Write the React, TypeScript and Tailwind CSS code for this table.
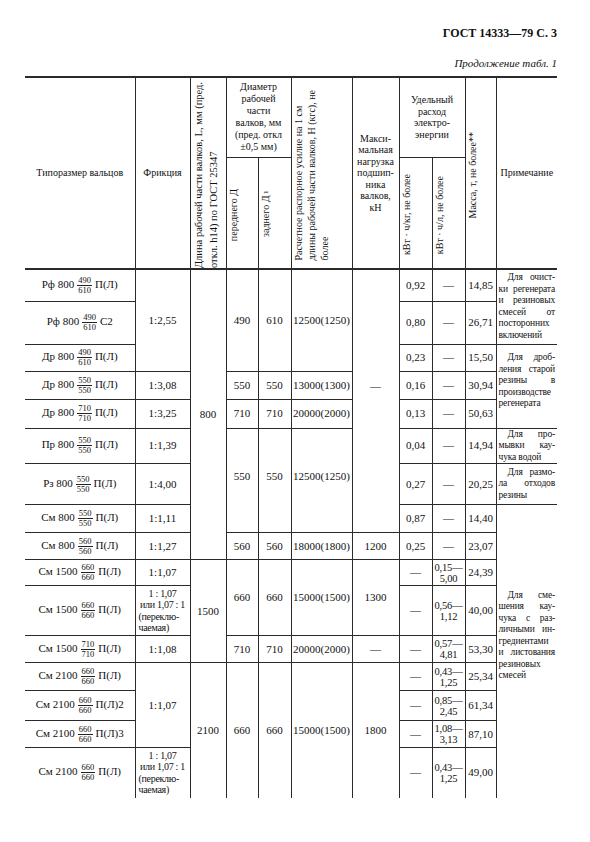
import React from "react";

const cell = "border border-[#2b2b2b] p-0 text-center align-middle";

function Fr({ a, b }: { a: string; b: string }) {
  return (
    <span className="inline-flex flex-col items-center align-middle text-[8.5px] leading-[9px] mx-[3px]">
      <span className="border-b border-[#222] px-[1px]">{a}</span>
      <span>{b}</span>
    </span>
  );
}

function Name({ p, n, a, b, s, last }: { p: string; n: string; a: string; b: string; s: string; last?: boolean }) {
  return (
    <td className={`${cell} border-l-0 whitespace-nowrap ${last ? "border-b-0" : ""}`}>
      {p} {n}
      <Fr a={a} b={b} />
      {s}
    </td>
  );
}

function V({ children, lh = "leading-[13px]" }: { children: React.ReactNode; lh?: string }) {
  return (
    <div className={`[writing-mode:vertical-rl] rotate-180 mx-auto whitespace-nowrap text-left pb-[4px] ${lh}`}>
      {children}
    </div>
  );
}

function Two({ a, b }: { a: string; b: string }) {
  return (
    <div className="text-[10.5px] leading-[11px] whitespace-nowrap tracking-[-0.2px]">
      {a}
      <br />
      {b}
    </div>
  );
}

function Switch() {
  return (
    <div className="text-[10px] leading-[11.5px] whitespace-nowrap tracking-[-0.3px]">
      1 : 1,07
      <br />
      или 1,07 : 1
      <br />
      <div className="text-left pl-[3px]">
        (переклю-
        <br />
        чаемая)
      </div>
    </div>
  );
}

function Note({ lines, top }: { lines: string[]; top?: boolean }) {
  return (
    <div
      className={`text-[9.5px] leading-[11.5px] tracking-[-0.15px] whitespace-nowrap px-[2px] ${top ? "pt-[4px]" : ""}`}
    >
      {lines.map((l, i) => (
        <div
          key={i}
          className={`${i === 0 ? "pl-[9px]" : ""} ${
            i < lines.length - 1 && l.includes(" ") ? "text-justify [text-align-last:justify]" : "text-left"
          }`}
        >
          {l}
        </div>
      ))}
    </div>
  );
}

const dash = "—";

export default function App() {
  return (
    <div className="bg-white text-[#111] font-['Liberation_Serif',serif] w-[590px] h-[842px] pt-[26px]">
      <div className="text-right pr-[33px] text-[12px] leading-[14px] font-bold">ГОСТ 14333—79 С. 3</div>
      <div className="text-right pr-[33px] mt-[16px] text-[11px] leading-[14px] italic">Продолжение табл. 1</div>
      <table className="ml-[25px] mt-[6px] w-[532px] table-fixed border-collapse text-[11px] leading-[13px]">
        <colgroup>
          <col className="w-[110px]" />
          <col className="w-[55px]" />
          <col className="w-[36px]" />
          <col className="w-[32px]" />
          <col className="w-[33px]" />
          <col className="w-[61px]" />
          <col className="w-[47px]" />
          <col className="w-[33px]" />
          <col className="w-[33px]" />
          <col className="w-[31px]" />
          <col className="w-[61px]" />
        </colgroup>
        <thead className="text-[10px] leading-[12px]">
          <tr className="h-[80px] border-t-2 border-[#2b2b2b]">
            <td rowSpan={2} className={`${cell} border-l-0`}>Типоразмер вальцов</td>
            <td rowSpan={2} className={cell}>Фрикция</td>
            <td rowSpan={2} className={`${cell} align-bottom text-[10.5px]`}>
              <V lh="leading-[15px]">
                Длина рабочей части валков, L, мм (пред.
                <br />
                откл. h14) по ГОСТ 25347
              </V>
            </td>
            <td colSpan={2} className={cell}>
              Диаметр
              <br />
              рабочей
              <br />
              части
              <br />
              валков, мм
              <br />
              (пред. откл
              <br />
              ±0,5 мм)
            </td>
            <td rowSpan={2} className={`${cell} align-bottom`}>
              <V>
                Расчетное распорное усилие на 1 см
                <br />
                длины рабочей части валков, Н (кгс), не
                <br />
                более
              </V>
            </td>
            <td rowSpan={2} className={`${cell} leading-[11.5px]`}>
              Макси-
              <br />
              мальная
              <br />
              нагрузка
              <br />
              подшип-
              <br />
              ника
              <br />
              валков,
              <br />
              кН
            </td>
            <td colSpan={2} className={`${cell} leading-[11.5px]`}>
              Удельный
              <br />
              расход
              <br />
              электро-
              <br />
              энергии
            </td>
            <td rowSpan={2} className={`${cell} align-bottom`}>
              <V>Масса, т, не более**</V>
            </td>
            <td rowSpan={2} className={`${cell} border-r-0`}>Примечание</td>
          </tr>
          <tr className="h-[112px] border-b-2 border-[#2b2b2b]">
            <td className={`${cell} align-bottom`}>
              <V>переднего Д</V>
            </td>
            <td className={`${cell} align-bottom`}>
              <V>
                заднего Д<sub className="text-[7px]">1</sub>
              </V>
            </td>
            <td className={`${cell} align-bottom`}>
              <V>кВт · ч/кг, не более</V>
            </td>
            <td className={`${cell} align-bottom`}>
              <V>кВт · ч/л, не более</V>
            </td>
          </tr>
        </thead>
        <tbody>
          <tr className="h-[32px]">
            <Name p="Рф" n="800" a="490" b="610" s="П(Л)" />
            <td rowSpan={3} className={cell}>1:2,55</td>
            <td rowSpan={9} className={cell}>800</td>
            <td rowSpan={3} className={cell}>490</td>
            <td rowSpan={3} className={cell}>610</td>
            <td rowSpan={3} className={cell}>12500(1250)</td>
            <td rowSpan={8} className={`${cell} pb-[30px]`}>{dash}</td>
            <td className={cell}>0,92</td>
            <td className={cell}>{dash}</td>
            <td className={cell}>14,85</td>
            <td rowSpan={2} className={`${cell} border-r-0`}>
              <Note lines={["Для очист-", "ки регенерата", "и резиновых", "смесей от", "посторонних", "включений"]} />
            </td>
          </tr>
          <tr className="h-[43px]">
            <Name p="Рф" n="800" a="490" b="610" s="С2" />
            <td className={cell}>0,80</td>
            <td className={cell}>{dash}</td>
            <td className={cell}>26,71</td>
          </tr>
          <tr className="h-[27px]">
            <Name p="Др" n="800" a="490" b="610" s="П(Л)" />
            <td className={cell}>0,23</td>
            <td className={cell}>{dash}</td>
            <td className={cell}>15,50</td>
            <td rowSpan={3} className={`${cell} border-r-0 pb-[10px]`}>
              <Note lines={["Для дроб-", "ления старой", "резины в", "производстве", "регенерата"]} />
            </td>
          </tr>
          <tr className="h-[28px]">
            <Name p="Др" n="800" a="550" b="550" s="П(Л)" />
            <td className={cell}>1:3,08</td>
            <td className={cell}>550</td>
            <td className={cell}>550</td>
            <td className={cell}>13000(1300)</td>
            <td className={cell}>0,16</td>
            <td className={cell}>{dash}</td>
            <td className={cell}>30,94</td>
          </tr>
          <tr className="h-[29px]">
            <Name p="Др" n="800" a="710" b="710" s="П(Л)" />
            <td className={cell}>1:3,25</td>
            <td className={cell}>710</td>
            <td className={cell}>710</td>
            <td className={cell}>20000(2000)</td>
            <td className={cell}>0,13</td>
            <td className={cell}>{dash}</td>
            <td className={cell}>50,63</td>
          </tr>
          <tr className="h-[34px]">
            <Name p="Пр" n="800" a="550" b="550" s="П(Л)" />
            <td className={cell}>1:1,39</td>
            <td rowSpan={3} className={`${cell} pb-[8px]`}>550</td>
            <td rowSpan={3} className={`${cell} pb-[8px]`}>550</td>
            <td rowSpan={3} className={`${cell} pb-[8px]`}>12500(1250)</td>
            <td className={cell}>0,04</td>
            <td className={cell}>{dash}</td>
            <td className={cell}>14,94</td>
            <td className={`${cell} border-r-0`}>
              <Note lines={["Для про-", "мывки кау-", "чука водой"]} />
            </td>
          </tr>
          <tr className="h-[41px]">
            <Name p="Рз" n="800" a="550" b="550" s="П(Л)" />
            <td className={cell}>1:4,00</td>
            <td className={cell}>0,27</td>
            <td className={cell}>{dash}</td>
            <td className={cell}>20,25</td>
            <td className={`${cell} border-r-0`}>
              <Note lines={["Для размо-", "ла отходов", "резины"]} />
            </td>
          </tr>
          <tr className="h-[28px]">
            <Name p="См" n="800" a="550" b="550" s="П(Л)" />
            <td className={cell}>1:1,11</td>
            <td className={cell}>0,87</td>
            <td className={cell}>{dash}</td>
            <td className={cell}>14,40</td>
            <td rowSpan={3} className={`${cell} border-r-0 border-b-0`}></td>
          </tr>
          <tr className="h-[27px]">
            <Name p="См" n="800" a="560" b="560" s="П(Л)" />
            <td className={cell}>1:1,27</td>
            <td className={cell}>560</td>
            <td className={cell}>560</td>
            <td className={cell}>18000(1800)</td>
            <td className={cell}>1200</td>
            <td className={cell}>0,25</td>
            <td className={cell}>{dash}</td>
            <td className={cell}>23,07</td>
          </tr>
          <tr className="h-[26px]">
            <Name p="См" n="1500" a="660" b="660" s="П(Л)" />
            <td className={cell}>1:1,07</td>
            <td rowSpan={3} className={cell}>1500</td>
            <td rowSpan={2} className={cell}>660</td>
            <td rowSpan={2} className={cell}>660</td>
            <td rowSpan={2} className={cell}>15000(1500)</td>
            <td rowSpan={2} className={cell}>1300</td>
            <td className={cell}>{dash}</td>
            <td className={cell}>
              <Two a="0,15—" b="5,00" />
            </td>
            <td className={cell}>24,39</td>
          </tr>
          <tr className="h-[50px]">
            <Name p="См" n="1500" a="660" b="660" s="П(Л)" />
            <td className={cell}>
              <Switch />
            </td>
            <td className={cell}>{dash}</td>
            <td className={cell}>
              <Two a="0,56—" b="1,12" />
            </td>
            <td className={cell}>40,00</td>
            <td rowSpan={6} className={`${cell} border-r-0 border-t-0 border-b-0 align-top`}>
              <Note
                top
                lines={[
                  "Для сме-",
                  "шения кау-",
                  "чука с раз-",
                  "личными ин-",
                  "гредиентами",
                  "и листования",
                  "резиновых",
                  "смесей",
                ]}
              />
            </td>
          </tr>
          <tr className="h-[27px]">
            <Name p="См" n="1500" a="710" b="710" s="П(Л)" />
            <td className={cell}>1:1,08</td>
            <td className={cell}>710</td>
            <td className={cell}>710</td>
            <td className={cell}>20000(2000)</td>
            <td className={cell}>{dash}</td>
            <td className={cell}>{dash}</td>
            <td className={cell}>
              <Two a="0,57—" b="4,81" />
            </td>
            <td className={cell}>53,30</td>
          </tr>
          <tr className="h-[28px]">
            <Name p="См" n="2100" a="660" b="660" s="П(Л)" />
            <td rowSpan={3} className={cell}>1:1,07</td>
            <td rowSpan={4} className={`${cell} border-b-0`}>2100</td>
            <td rowSpan={4} className={`${cell} border-b-0`}>660</td>
            <td rowSpan={4} className={`${cell} border-b-0`}>660</td>
            <td rowSpan={4} className={`${cell} border-b-0`}>15000(1500)</td>
            <td rowSpan={4} className={`${cell} border-b-0`}>1800</td>
            <td className={cell}>{dash}</td>
            <td className={cell}>
              <Two a="0,43—" b="1,25" />
            </td>
            <td className={cell}>25,34</td>
          </tr>
          <tr className="h-[30px]">
            <Name p="См" n="2100" a="660" b="660" s="П(Л)2" />
            <td className={cell}>{dash}</td>
            <td className={cell}>
              <Two a="0,85—" b="2,45" />
            </td>
            <td className={cell}>61,34</td>
          </tr>
          <tr className="h-[27px]">
            <Name p="См" n="2100" a="660" b="660" s="П(Л)3" />
            <td className={cell}>{dash}</td>
            <td className={cell}>
              <Two a="1,08—" b="3,13" />
            </td>
            <td className={cell}>87,10</td>
          </tr>
          <tr className="h-[50px]">
            <Name p="См" n="2100" a="660" b="660" s="П(Л)" last />
            <td className={`${cell} border-b-0`}>
              <Switch />
            </td>
            <td className={`${cell} border-b-0`}>{dash}</td>
            <td className={`${cell} border-b-0`}>
              <Two a="0,43—" b="1,25" />
            </td>
            <td className={`${cell} border-b-0`}>49,00</td>
          </tr>
        </tbody>
      </table>
    </div>
  );
}
